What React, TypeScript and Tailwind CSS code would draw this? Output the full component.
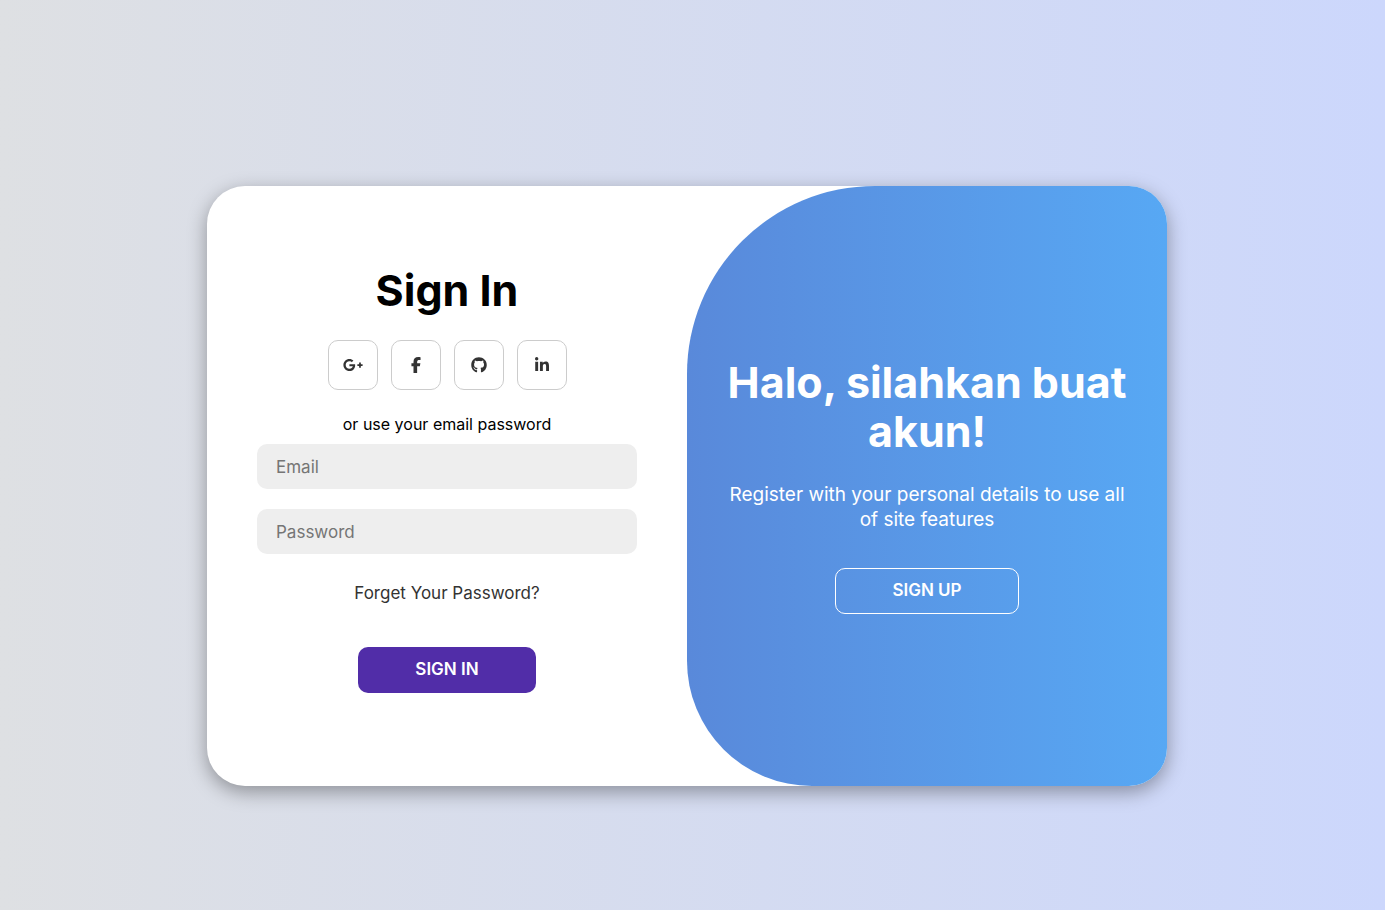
import { FaFacebookF, FaGithub, FaGooglePlusG, FaLinkedinIn } from "react-icons/fa6";

const socials = [
  { label: "Google Plus", icon: <FaGooglePlusG className="h-4 w-5" /> },
  { label: "Facebook", icon: <FaFacebookF className="h-4 w-[10px]" /> },
  { label: "GitHub", icon: <FaGithub className="h-4 w-4" /> },
  { label: "LinkedIn", icon: <FaLinkedinIn className="h-4 w-[14px]" /> },
];

function SignInForm() {
  return (
    <form
      className="flex flex-col items-center justify-center px-[50px]"
      onSubmit={(event) => event.preventDefault()}
    >
      <h1 className="text-[43px] leading-[48px] font-bold text-black">Sign In</h1>
      <div className="mt-[26px] flex gap-[13px]">
        {socials.map(({ label, icon }) => (
          <a
            key={label}
            href="#"
            aria-label={label}
            className="flex size-[50px] items-center justify-center rounded-[10px] border border-[#cccccc] text-[#333333]"
          >
            {icon}
          </a>
        ))}
      </div>
      <p className="mt-6 text-base leading-5 text-black">or use your email password</p>
      <input
        type="email"
        aria-label="Email"
        placeholder="Email"
        className="mt-[10px] h-[45px] w-full rounded-[10px] bg-[#eeeeee] px-[19px] text-[17px] text-[#333333] outline-none placeholder:text-[#757575]"
      />
      <input
        type="password"
        aria-label="Password"
        placeholder="Password"
        className="mt-5 h-[45px] w-full rounded-[10px] bg-[#eeeeee] px-[19px] text-[17px] text-[#333333] outline-none placeholder:text-[#757575]"
      />
      <a href="#" className="mt-[29px] text-[17px] leading-5 text-[#333333]">
        Forget Your Password?
      </a>
      <button
        type="submit"
        className="mt-11 mb-[13px] h-[46px] w-[178px] rounded-[10px] bg-[#512da8] text-[17px] font-semibold text-white"
      >
        SIGN IN
      </button>
    </form>
  );
}

function WelcomePanel() {
  return (
    <section className="flex flex-col items-center justify-center rounded-tl-[188px] rounded-bl-[125px] bg-linear-to-r from-[#5989da] to-[#57a8f4] px-[30px] text-center text-white">
      <h2 className="text-[43px] leading-[49px] font-bold">Halo, silahkan buat akun!</h2>
      <p className="mt-[26px] px-2 text-[19px] leading-[25px]">
        Register with your personal details to use all of site features
      </p>
      <button
        type="button"
        className="mt-9 h-[46px] w-[184px] rounded-[10px] border border-white text-[17px] font-semibold"
      >
        SIGN UP
      </button>
    </section>
  );
}

export default function App() {
  return (
    <main className="flex min-h-screen items-center justify-center bg-linear-to-r from-[#dee0e3] to-[#ccd7fc] pt-[62px] pr-[11px] font-['Inter',sans-serif]">
      <div className="grid min-h-[600px] w-full max-w-[960px] grid-cols-2 overflow-hidden rounded-[38px] bg-white shadow-[0_6px_19px_rgba(0,0,0,0.35)]">
        <SignInForm />
        <WelcomePanel />
      </div>
    </main>
  );
}
